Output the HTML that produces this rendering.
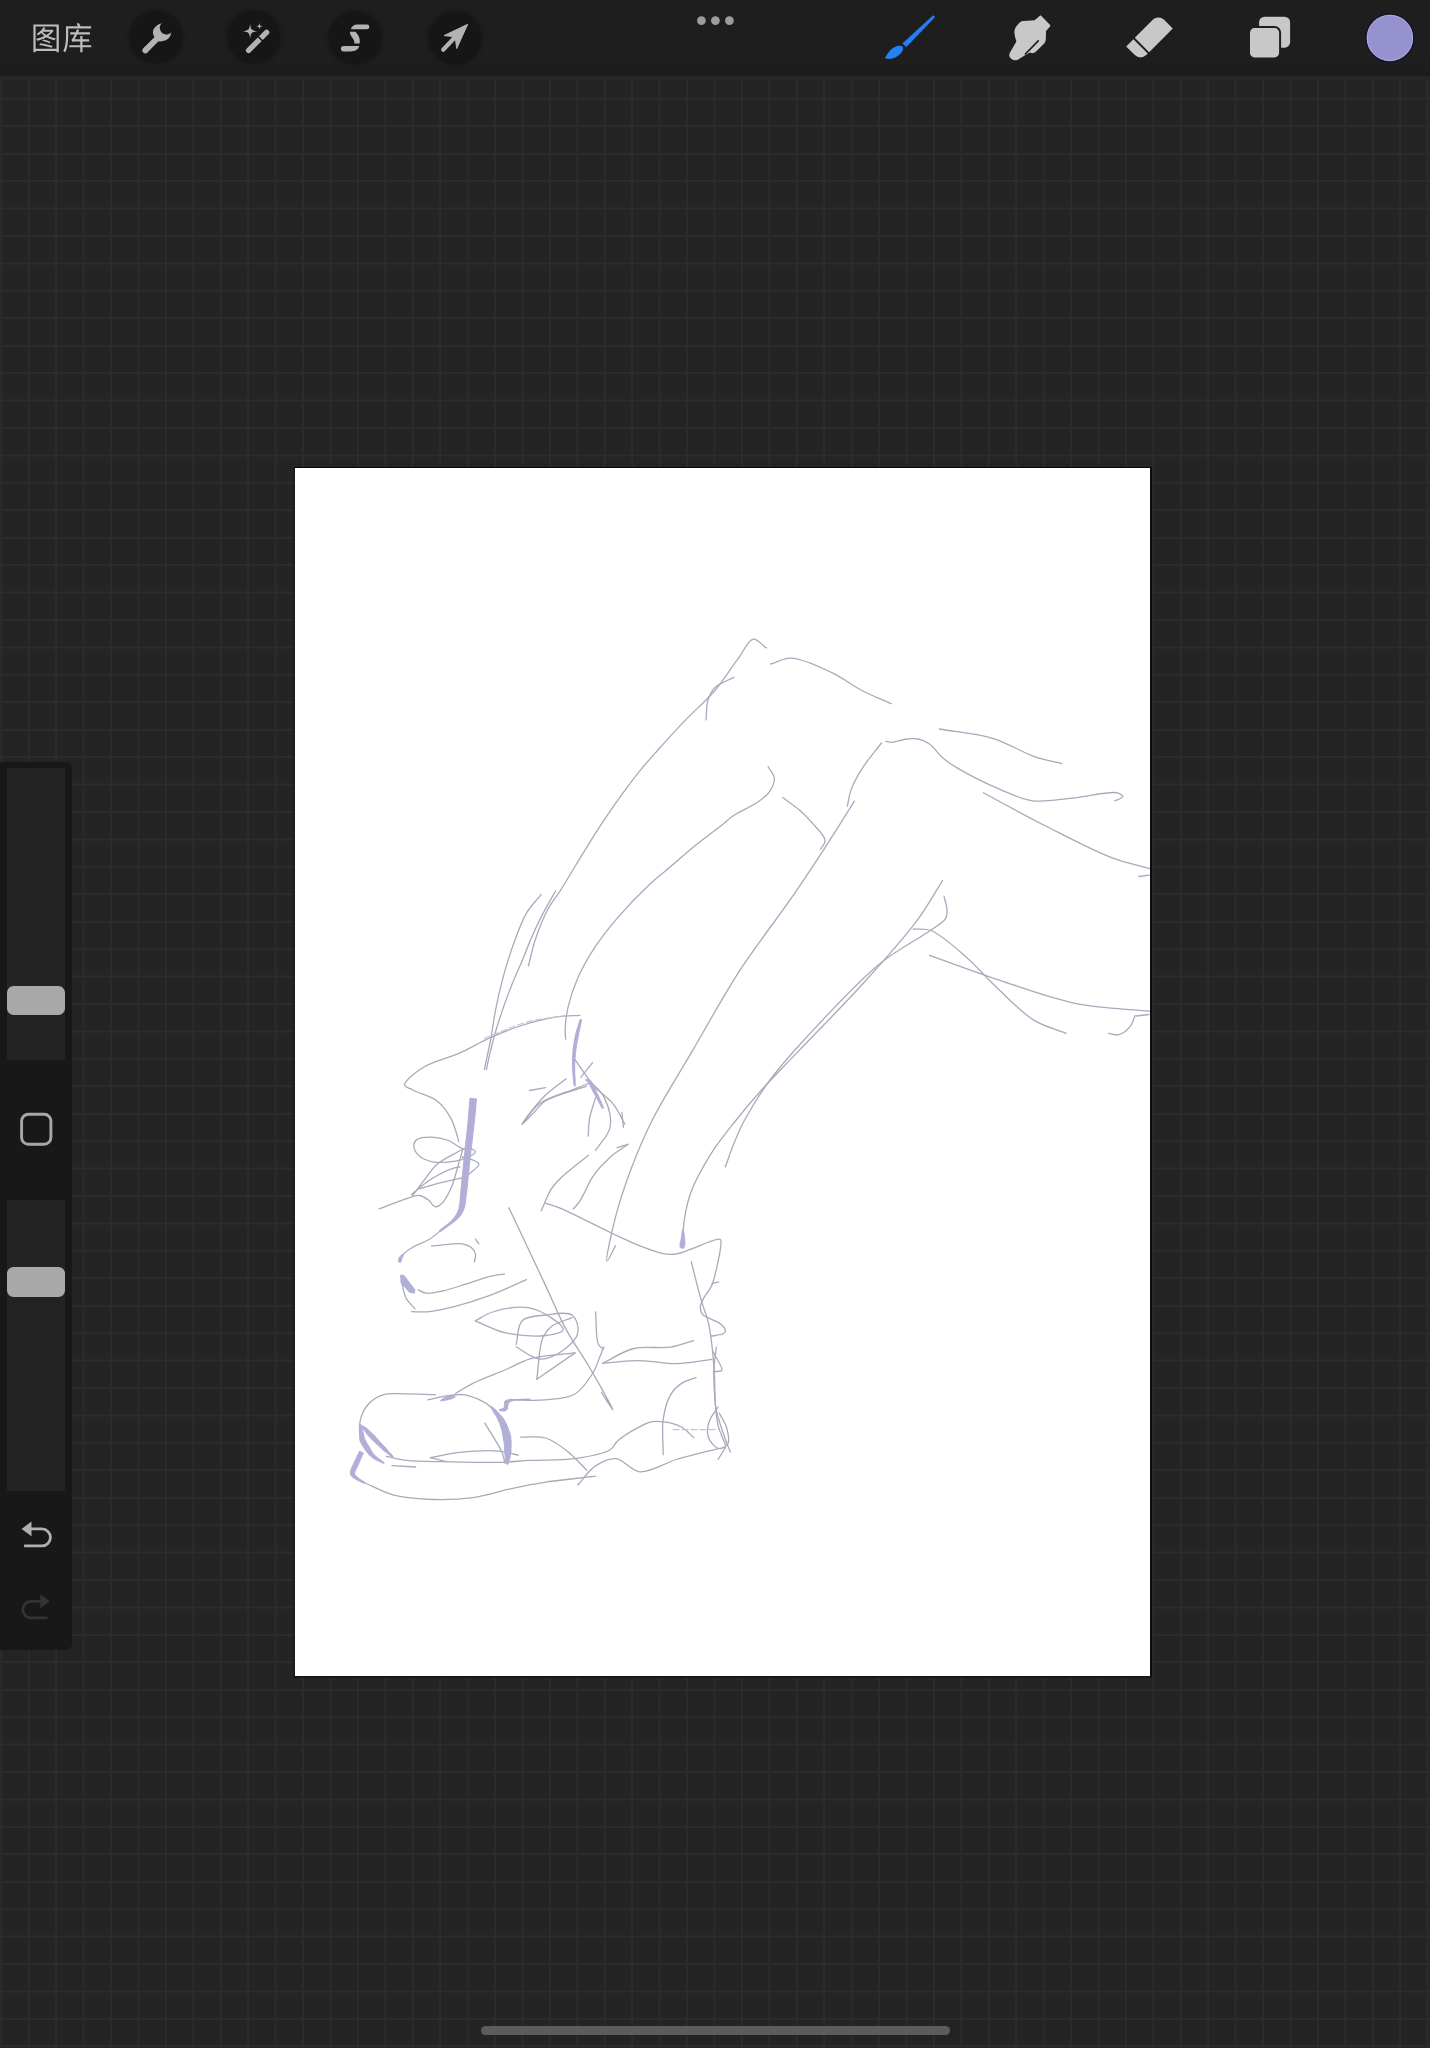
<!DOCTYPE html>
<html><head><meta charset="utf-8">
<style>
html,body{margin:0;padding:0;}
body{width:1430px;height:2048px;overflow:hidden;background:#242424;position:relative;font-family:"Liberation Sans",sans-serif;}
.abs{position:absolute;}
#grid{position:absolute;left:0;top:0;}
#topbar{position:absolute;left:0;top:0;width:1430px;height:75.5px;background:linear-gradient(to bottom,#1e1e1e 0px,#1e1e1e 62px,#1b1b1b 75.5px);}
#topband{position:absolute;left:0;top:75.5px;width:1430px;height:4px;background:#272727;}
#canvas{position:absolute;left:295px;top:468px;width:855px;height:1208px;background:#fff;}
.cb{position:absolute;}
#side{position:absolute;left:0;top:762px;width:72px;height:888px;background:#181818;border-radius:0 6px 6px 0;}
.track{position:absolute;left:7px;width:58.4px;background:#232323;border-radius:1px;}
.thumb{position:absolute;left:6.9px;width:58.2px;height:29.4px;background:#a9a9a9;border-radius:6.5px;}
#home{position:absolute;left:481px;top:2025.5px;width:469px;height:9.2px;border-radius:4.6px;background:#5c5c5c;}
.icirc{position:absolute;width:52px;height:52px;border-radius:50%;background:#161616;box-shadow:0 0 3px 1.5px #181818;}
</style></head><body>
<svg id="grid" width="1430" height="2048"><path d="M1.27 0V2048M28.70 0V2048M56.13 0V2048M83.56 0V2048M110.99 0V2048M138.42 0V2048M165.85 0V2048M193.28 0V2048M220.71 0V2048M248.14 0V2048M275.57 0V2048M303.00 0V2048M330.43 0V2048M357.86 0V2048M385.29 0V2048M412.72 0V2048M440.15 0V2048M467.58 0V2048M495.01 0V2048M522.44 0V2048M549.87 0V2048M577.30 0V2048M604.73 0V2048M632.16 0V2048M659.59 0V2048M687.02 0V2048M714.45 0V2048M741.88 0V2048M769.31 0V2048M796.74 0V2048M824.17 0V2048M851.60 0V2048M879.03 0V2048M906.46 0V2048M933.89 0V2048M961.32 0V2048M988.75 0V2048M1016.18 0V2048M1043.61 0V2048M1071.04 0V2048M1098.47 0V2048M1125.90 0V2048M1153.33 0V2048M1180.76 0V2048M1208.19 0V2048M1235.62 0V2048M1263.05 0V2048M1290.48 0V2048M1317.91 0V2048M1345.34 0V2048M1372.77 0V2048M1400.20 0V2048M1427.63 0V2048M0 16.51H1430M0 43.94H1430M0 71.37H1430M0 98.80H1430M0 126.23H1430M0 153.66H1430M0 181.09H1430M0 208.52H1430M0 235.95H1430M0 263.38H1430M0 290.81H1430M0 318.24H1430M0 345.67H1430M0 373.10H1430M0 400.53H1430M0 427.96H1430M0 455.39H1430M0 482.82H1430M0 510.25H1430M0 537.68H1430M0 565.11H1430M0 592.54H1430M0 619.97H1430M0 647.40H1430M0 674.83H1430M0 702.26H1430M0 729.69H1430M0 757.12H1430M0 784.55H1430M0 811.98H1430M0 839.41H1430M0 866.84H1430M0 894.27H1430M0 921.70H1430M0 949.13H1430M0 976.56H1430M0 1003.99H1430M0 1031.42H1430M0 1058.85H1430M0 1086.28H1430M0 1113.71H1430M0 1141.14H1430M0 1168.57H1430M0 1196.00H1430M0 1223.43H1430M0 1250.86H1430M0 1278.29H1430M0 1305.72H1430M0 1333.15H1430M0 1360.58H1430M0 1388.01H1430M0 1415.44H1430M0 1442.87H1430M0 1470.30H1430M0 1497.73H1430M0 1525.16H1430M0 1552.59H1430M0 1580.02H1430M0 1607.45H1430M0 1634.88H1430M0 1662.31H1430M0 1689.74H1430M0 1717.17H1430M0 1744.60H1430M0 1772.03H1430M0 1799.46H1430M0 1826.89H1430M0 1854.32H1430M0 1881.75H1430M0 1909.18H1430M0 1936.61H1430M0 1964.04H1430M0 1991.47H1430M0 2018.90H1430M0 2046.33H1430" stroke="#2c2c2c" stroke-width="2" fill="none"/></svg>
<div id="topbar"></div>
<div id="topband"></div>
<div class="icirc" style="left:130px;top:11px"></div>
<div class="icirc" style="left:228px;top:11px"></div>
<div class="icirc" style="left:329px;top:12px"></div>
<div class="icirc" style="left:429px;top:12px"></div>
<div class="cb" style="left:293.2px;top:467px;width:1.8px;height:1211px;background:#1d1d1d"></div>
<div class="cb" style="left:293.2px;top:1676px;width:859px;height:1.8px;background:#181818"></div>
<div class="cb" style="left:294px;top:466.8px;width:858px;height:1.4px;background:#060606"></div>
<div class="cb" style="left:1150px;top:467px;width:1.9px;height:1210px;background:#0b0b0b"></div>
<div id="canvas">
<svg width="855" height="1208" style="position:absolute;left:0;top:0">
<g transform="translate(-295,-468)" fill="none" stroke-linecap="round" stroke-linejoin="round">
<g stroke="#aaa9bc" stroke-width="1.3">
<path d="M528.4,966.0C530.7,957.3 532.2,948.9 535.2,940.0C538.5,930.1 543.2,918.1 547.9,909.3C551.8,902.0 556.2,897.1 560.6,890.2C565.5,882.4 569.9,874.7 575.9,865.0C584.2,851.5 595.5,832.6 606.2,816.9C616.9,801.2 630.3,782.9 640.0,770.7C646.7,762.3 651.2,757.5 657.9,750.0C666.1,740.8 676.1,729.8 685.6,719.9C695.2,709.9 706.1,700.9 715.0,690.5C723.7,680.3 731.4,667.5 738.4,658.2C743.8,651.0 747.9,640.0 753.1,639.1C757.3,638.4 761.9,645.0 766.3,647.9"/>
<path d="M706.1,719.9C706.7,713.3 706.2,705.7 708.0,700.0C709.5,695.2 711.4,691.0 715.0,687.5C719.4,683.2 727.7,680.7 734.0,677.3"/>
<path d="M770.8,664.0C777.6,662.1 783.3,657.9 791.3,658.2C802.7,658.6 820.1,667.1 832.4,672.9C843.3,678.1 851.8,685.3 861.8,690.5C871.5,695.5 881.4,699.3 891.2,703.7"/>
<path d="M768.1,766.8C770.2,770.5 773.9,774.0 774.3,778.0C774.7,782.2 772.3,787.5 769.8,791.4C767.2,795.4 763.3,798.1 758.6,801.5C752.0,806.3 739.7,811.3 732.9,816.0C727.9,819.4 725.4,822.3 720.6,826.1C713.8,831.5 703.8,838.7 695.9,845.1C688.2,851.3 681.1,857.7 673.6,864.1C665.9,870.7 658.3,876.2 650.0,884.0C639.7,893.7 626.7,907.1 617.1,918.3C608.6,928.2 601.4,937.4 594.8,947.4C588.4,957.1 582.5,967.3 578.0,977.6C573.6,987.5 570.0,998.4 567.9,1007.8C566.1,1015.7 565.3,1024.4 565.1,1030.2C565.0,1033.9 565.5,1036.2 565.7,1039.2"/>
<path d="M782.7,797.6C788.5,801.9 794.9,806.0 800.0,810.4C804.5,814.3 808.0,818.0 811.9,822.6C816.4,827.8 824.7,835.3 825.1,840.3C825.4,843.6 822.2,846.2 820.7,849.1"/>
<path d="M847.3,806.1C848.6,800.5 849.1,795.2 851.2,789.4C853.7,782.6 857.8,775.3 862.4,768.1C867.6,759.9 875.1,751.4 881.4,743.0"/>
<path d="M885.9,741.3C887.8,741.7 889.2,742.4 891.5,742.4C895.4,742.4 902.3,739.5 907.1,739.0C911.1,738.6 914.6,738.2 918.3,739.0C922.1,739.8 925.8,741.4 929.5,744.0C934.1,747.2 938.1,753.9 942.9,758.0C947.5,761.9 951.2,764.4 957.5,768.1C967.8,774.2 986.6,783.7 1000.0,789.4C1011.4,794.2 1020.9,799.2 1032.5,800.8C1044.9,802.5 1058.6,799.4 1072.3,798.1C1086.9,796.7 1110.0,790.8 1117.5,792.8C1120.4,793.6 1122.9,795.6 1122.8,796.8C1122.7,798.2 1117.5,799.5 1114.8,800.8"/>
<path d="M854.4,801.1C844.7,816.5 835.5,831.5 825.2,847.3C814.3,864.1 803.4,880.6 790.6,899.1C775.5,921.0 756.1,945.3 740.0,970.1C723.3,995.8 707.5,1025.0 692.4,1050.9C678.4,1074.8 663.2,1098.5 652.3,1120.0C643.3,1137.8 636.8,1153.8 630.5,1170.4C624.6,1186.2 619.4,1201.8 615.4,1217.3C611.6,1232.0 605.3,1260.4 607.0,1261.0C608.1,1261.4 612.6,1250.9 615.4,1245.9"/>
<path d="M939.4,729.0C957.1,732.1 976.1,733.3 992.6,738.3C1007.9,742.9 1022.4,752.6 1035.1,756.9C1044.8,760.2 1052.8,761.4 1061.7,763.6"/>
<path d="M983.3,792.8C1004.1,803.9 1024.5,815.3 1045.7,826.0C1067.4,837.0 1093.0,850.6 1112.2,857.9C1126.1,863.2 1137.0,865.0 1149.4,868.5"/>
<path d="M1138.8,876.5L1149.4,875.2"/>
<path d="M942.6,880.6C933.8,894.3 927.1,907.0 916.2,921.7C902.1,940.6 882.1,962.5 863.3,983.3C843.1,1005.6 817.5,1031.2 798.7,1050.9C784.1,1066.2 771.2,1079.2 760.0,1091.7C750.9,1101.8 744.1,1110.0 736.2,1120.0C727.8,1130.6 718.6,1141.7 711.1,1153.6C703.5,1165.7 695.4,1180.0 690.9,1192.2C687.2,1202.2 685.6,1211.3 684.2,1220.7C682.9,1229.7 683.1,1238.6 682.5,1247.6"/>
<path d="M944.1,896.7C945.1,901.1 946.9,905.9 947.0,909.9C947.1,913.1 947.3,915.8 945.6,918.7C942.9,923.2 935.4,926.8 928.0,932.0C916.2,940.3 897.7,949.3 881.0,962.8C858.3,981.2 827.6,1014.5 807.5,1036.2C792.5,1052.3 780.8,1065.3 770.0,1080.0C760.2,1093.3 750.9,1108.5 744.6,1120.0C740.1,1128.2 737.7,1134.2 734.6,1141.8C731.3,1149.8 728.4,1158.6 725.3,1167.0"/>
<path d="M913.3,929.0C919.2,929.5 924.4,928.0 930.9,930.5C941.1,934.4 955.2,947.5 966.1,956.9C976.7,966.1 984.9,976.3 995.5,986.3C1007.2,997.4 1020.8,1012.1 1033.7,1020.1C1044.4,1026.7 1055.2,1028.9 1066.0,1033.3"/>
<path d="M929.4,955.4C954.4,964.2 979.4,973.8 1004.3,981.9C1028.8,989.9 1053.1,999.0 1077.7,1003.9C1101.6,1008.6 1125.7,1008.8 1149.7,1011.2"/>
<path d="M1135.0,1015.7C1133.5,1019.1 1133.0,1022.9 1130.6,1025.9C1127.9,1029.4 1122.9,1033.7 1118.9,1034.7C1115.5,1035.6 1112.0,1033.8 1108.6,1033.3"/>
<path d="M1136.0,1016.0L1149.0,1014.5"/>
<path d="M541.1,894.6C536.2,900.8 530.8,905.7 526.4,913.2C521.0,922.4 516.7,935.4 512.7,946.4C508.9,956.9 505.9,967.0 503.0,977.7C500.0,988.8 497.2,1001.4 495.2,1011.8C493.5,1020.6 492.9,1027.5 491.3,1036.2C489.4,1046.5 486.7,1058.4 484.4,1069.5"/>
<path d="M555.7,890.7C550.8,899.5 545.5,908.5 541.1,917.1C537.1,925.1 533.5,933.0 530.3,940.5C527.4,947.3 525.4,953.0 522.5,960.0C519.0,968.4 514.7,977.4 510.8,987.4C506.2,999.2 500.8,1014.3 497.1,1026.5C493.9,1036.9 491.2,1047.8 489.3,1055.8C488.0,1061.2 487.4,1064.9 486.4,1069.5"/>
<path d="M580.0,1015.3C572.6,1015.8 566.1,1015.4 557.7,1016.7C546.4,1018.5 530.6,1022.6 518.6,1026.5C508.0,1029.9 499.0,1033.9 489.3,1038.2C479.4,1042.6 470.5,1048.2 460.0,1052.9C448.3,1058.2 432.0,1061.7 422.2,1068.0C414.6,1072.9 404.2,1081.2 404.6,1085.0C404.9,1087.4 409.2,1088.1 412.7,1090.0C418.6,1093.2 430.9,1096.1 437.4,1101.2C443.2,1105.7 447.4,1112.0 450.8,1118.1C454.1,1124.0 456.3,1132.9 457.6,1137.1C458.2,1139.1 458.3,1140.1 458.7,1141.6"/>
<path d="M447.5,1224.7C441.5,1229.6 435.6,1235.4 429.5,1239.3C424.0,1242.7 417.5,1244.3 412.7,1247.2C408.8,1249.6 404.8,1252.2 402.6,1255.0C400.9,1257.1 400.7,1259.5 399.7,1261.8"/>
<path d="M580.8,1020.0C578.6,1028.7 575.5,1038.5 574.3,1046.0C573.4,1051.5 573.3,1055.5 573.3,1060.7C573.3,1066.7 574.4,1075.4 574.7,1080.0C574.9,1082.6 574.9,1084.1 575.0,1086.1"/>
<path d="M575.0,1059.7C579.9,1066.6 584.6,1073.8 589.6,1080.3C594.4,1086.4 600.9,1090.5 604.3,1097.6C608.2,1105.7 611.8,1118.0 610.2,1127.0C608.6,1135.6 600.4,1142.7 595.5,1150.5"/>
<path d="M592.6,1062.6L580.8,1077.3"/>
<path d="M589.6,1083.2C597.4,1090.1 607.0,1096.4 613.1,1103.8C618.4,1110.2 621.0,1117.5 624.9,1124.3"/>
<path d="M595.5,1097.9C593.5,1104.7 590.8,1111.8 589.6,1118.4C588.5,1124.4 588.7,1130.1 588.2,1136.0"/>
<path d="M621.9,1112.6L623.4,1127.3"/>
<path d="M529.4,1090.5L545.6,1087.6"/>
<path d="M566.1,1078.8C559.3,1084.2 551.9,1088.9 545.6,1095.0C539.2,1101.2 532.2,1110.0 528.0,1115.5C525.4,1119.0 521.8,1124.1 522.1,1124.3C522.5,1124.6 529.9,1116.5 533.8,1112.6C537.7,1108.7 539.9,1104.4 545.6,1100.8C554.8,1095.0 573.0,1091.0 586.7,1086.1"/>
<path d="M471.0,1148.4C468.0,1148.4 465.3,1149.3 462.1,1148.4C457.9,1147.3 453.5,1142.4 448.6,1140.5C443.4,1138.5 437.1,1137.2 431.7,1137.1C426.7,1137.0 420.0,1137.2 417.1,1139.4C415.0,1140.9 413.8,1143.7 413.8,1146.1C413.8,1148.9 415.8,1152.6 418.3,1155.1C421.5,1158.2 427.0,1160.7 432.9,1161.8C440.8,1163.2 454.5,1162.0 462.1,1159.6C467.7,1157.9 475.4,1153.8 475.5,1151.7C475.6,1150.4 472.5,1149.5 471.0,1148.4"/>
<path d="M412.7,1195.5C417.2,1189.5 421.8,1183.1 426.1,1177.6C430.0,1172.7 432.5,1168.3 437.4,1164.1C443.7,1158.7 453.9,1154.4 462.1,1149.5"/>
<path d="M379.0,1209.0C390.2,1204.9 405.7,1198.4 412.7,1196.6C415.7,1195.8 417.1,1195.1 419.4,1195.5C422.2,1195.9 425.8,1198.1 428.4,1200.0C431.0,1201.9 432.7,1206.3 435.1,1206.7C437.2,1207.0 439.7,1205.3 441.8,1203.4C445.0,1200.5 448.1,1194.7 450.8,1188.8C454.4,1180.9 457.5,1167.0 459.8,1159.6C461.2,1155.0 462.1,1152.1 463.2,1148.4"/>
<path d="M431.7,1246.0C441.8,1245.3 455.1,1242.8 462.1,1243.8C466.0,1244.4 468.7,1245.4 471.0,1247.2C473.1,1248.9 474.9,1251.5 475.5,1253.9C476.1,1256.3 474.8,1259.2 474.4,1261.8"/>
<path d="M475.5,1239.3L478.9,1243.8"/>
<path d="M401.4,1280.8C402.9,1286.4 403.5,1292.9 405.9,1297.7C408.1,1302.1 411.9,1305.2 414.9,1308.9"/>
<path d="M418.3,1289.8C420.9,1290.9 422.9,1292.8 426.1,1293.2C430.6,1293.8 437.0,1292.2 443.0,1290.9C450.0,1289.4 457.8,1286.6 465.4,1284.2C473.4,1281.7 482.8,1278.2 490.0,1276.4C495.4,1275.1 499.7,1274.7 504.5,1273.8"/>
<path d="M411.5,1311.7C417.5,1311.7 423.1,1312.3 429.5,1311.7C437.1,1310.9 445.3,1309.0 454.2,1306.7C465.1,1303.9 478.1,1299.8 490.0,1295.4C502.2,1290.9 514.3,1284.9 526.5,1279.7"/>
<path d="M508.9,1207.8C521.1,1233.7 535.1,1263.4 545.6,1285.6C553.4,1302.3 558.6,1315.5 566.1,1329.4C573.3,1342.8 581.9,1354.3 589.6,1367.5C597.6,1381.2 613.6,1409.8 613.1,1410.1C612.8,1410.3 605.3,1398.4 601.4,1392.5"/>
<path d="M475.1,1320.8C481.0,1317.9 485.6,1314.1 492.7,1312.0C502.2,1309.1 517.6,1306.1 528.0,1307.6C536.8,1308.9 545.3,1313.7 551.5,1317.9C556.5,1321.3 563.9,1326.7 563.2,1329.6C562.5,1332.7 552.8,1334.6 545.6,1335.5C534.9,1336.9 516.9,1335.4 504.5,1332.6C493.7,1330.1 484.9,1324.7 475.1,1320.8"/>
<path d="M516.2,1344.3C518.2,1336.5 517.2,1325.7 522.1,1320.8C527.0,1315.9 537.5,1316.0 545.6,1315.0C554.1,1314.0 566.7,1311.2 572.0,1315.0C576.4,1318.2 579.0,1327.0 577.9,1332.6C576.7,1338.8 569.4,1345.8 563.2,1350.2C556.8,1354.8 547.4,1359.4 539.7,1359.0C531.8,1358.5 524.0,1351.0 516.2,1347.0"/>
<path d="M536.8,1379.3C538.7,1365.6 538.8,1347.4 542.6,1338.2C544.9,1332.7 547.4,1329.6 551.5,1326.4C556.6,1322.4 565.2,1320.5 572.0,1317.6"/>
<path d="M536.8,1379.3L575.0,1352.9"/>
<path d="M522.1,1124.1C528.0,1117.2 532.0,1109.1 539.7,1103.5C548.9,1096.8 565.8,1092.6 575.0,1088.8C580.9,1086.4 584.7,1084.9 589.6,1083.0"/>
<path d="M541.2,1210.7C544.6,1203.4 547.8,1194.4 551.5,1188.7C554.2,1184.5 556.1,1182.5 560.0,1178.7C566.5,1172.3 579.0,1163.0 588.5,1155.2"/>
<path d="M573.4,1209.0C575.6,1206.2 577.7,1204.3 580.1,1200.6C584.1,1194.6 588.3,1182.9 593.6,1175.4C598.5,1168.4 604.4,1162.2 610.4,1156.9C616.0,1152.0 622.1,1148.5 628.0,1144.3"/>
<path d="M617.1,1147.7L628.0,1144.3"/>
<path d="M545.6,1203.3C550.4,1204.9 553.8,1205.6 560.0,1208.1C571.8,1212.9 595.8,1225.7 610.4,1232.5C621.5,1237.7 630.5,1242.2 640.0,1245.9C648.4,1249.2 657.6,1252.7 664.4,1253.8C669.1,1254.5 671.4,1254.7 676.6,1253.8C686.4,1252.1 712.6,1239.5 718.1,1239.2C719.4,1239.1 720.1,1239.0 720.6,1239.8C722.8,1243.2 715.5,1273.7 713.3,1281.3C712.4,1284.3 712.0,1285.1 710.8,1287.4C709.1,1290.6 705.3,1294.9 703.5,1298.4C702.0,1301.3 700.5,1304.2 700.4,1306.9C700.3,1309.4 700.9,1312.4 702.3,1314.2C703.6,1316.0 706.0,1316.6 708.4,1317.9C711.7,1319.7 717.7,1321.4 720.6,1324.0C723.0,1326.1 725.7,1329.6 725.5,1331.3C725.4,1332.4 724.3,1333.1 723.0,1333.8C720.6,1335.1 714.9,1335.4 710.8,1336.2"/>
<path d="M712.0,1283.7L718.8,1281.9"/>
<path d="M691.3,1261.7C694.5,1274.3 697.8,1288.5 701.0,1299.6C703.5,1308.3 706.6,1315.0 708.4,1322.8C710.2,1330.5 711.0,1337.7 712.0,1346.0C713.1,1355.5 713.9,1366.3 714.5,1376.5C715.1,1386.7 714.4,1398.2 715.7,1407.0C716.8,1414.0 718.7,1419.1 720.6,1425.4C722.7,1432.1 726.1,1441.3 727.9,1446.1C728.9,1448.8 729.6,1450.2 730.4,1452.2"/>
<path d="M716.3,1347.2C715.5,1354.9 714.2,1362.1 713.9,1370.4C713.6,1379.9 714.3,1391.3 715.1,1400.9C715.8,1409.5 716.2,1417.8 718.1,1425.4C719.8,1432.4 723.0,1438.4 725.5,1444.9"/>
<path d="M713.3,1352.1C716.1,1358.2 723.3,1367.6 721.8,1370.4C720.8,1372.2 716.1,1371.2 713.3,1371.6"/>
<path d="M718.1,1407.0C715.3,1411.5 711.3,1415.7 709.6,1420.5C708.0,1425.1 707.0,1430.8 707.8,1435.1C708.5,1438.8 711.1,1442.6 713.3,1444.9C715.1,1446.7 717.2,1448.6 719.4,1448.6C722.0,1448.6 726.5,1446.4 727.9,1443.7C729.7,1440.2 728.1,1432.9 726.7,1427.8C725.3,1422.7 721.8,1418.1 719.4,1413.2"/>
<path d="M718.1,1459.5L725.5,1447.3"/>
<path d="M595.5,1312.0C596.5,1322.8 595.7,1338.8 598.4,1344.3C599.5,1346.7 601.3,1347.1 602.8,1348.5"/>
<path d="M602.8,1363.1C613.1,1358.2 622.7,1351.2 633.7,1348.5C645.2,1345.7 659.7,1348.9 670.5,1347.2C679.2,1345.8 686.0,1342.7 693.7,1340.5"/>
<path d="M602.8,1363.1C615.2,1362.3 627.7,1360.5 640.0,1360.6C652.3,1360.7 664.5,1363.9 676.6,1363.7C688.5,1363.5 700.2,1360.8 712.0,1359.4"/>
<path d="M383.8,1463.0C378.1,1458.6 370.6,1455.1 366.6,1449.7C362.9,1444.8 360.7,1438.2 359.9,1432.5C359.1,1427.2 359.7,1421.4 361.3,1416.5C362.9,1411.7 365.6,1406.8 369.2,1403.2C373.0,1399.4 378.2,1396.2 383.8,1394.6C390.3,1392.7 398.4,1393.9 406.4,1393.9C415.5,1393.9 425.9,1394.4 435.7,1394.6"/>
<path d="M365.2,1483.0C374.5,1487.0 382.8,1492.2 393.1,1494.9C405.0,1498.1 419.7,1499.1 433.0,1499.5C446.3,1499.9 459.7,1499.4 472.9,1497.6C486.3,1495.7 500.0,1491.0 512.7,1488.3C524.2,1485.9 533.5,1484.0 545.6,1482.1C560.5,1479.8 578.9,1478.2 595.5,1476.2"/>
<path d="M391.8,1465.7L415.7,1467.0"/>
<path d="M430.4,1457.7C440.1,1455.9 449.1,1453.5 459.6,1452.4C471.8,1451.1 488.7,1450.2 499.4,1451.1C506.8,1451.7 511.8,1453.7 518.0,1455.0"/>
<path d="M386.5,1456.4C393.1,1457.7 398.6,1459.5 406.4,1460.4C417.4,1461.7 432.0,1461.4 446.3,1461.7C462.7,1462.1 484.1,1462.7 499.4,1462.3C511.0,1462.0 518.8,1461.0 530.0,1460.4C543.6,1459.7 561.0,1460.6 575.0,1458.6C587.6,1456.8 603.2,1454.2 610.2,1449.8C614.1,1447.3 614.1,1444.0 617.5,1441.0C622.7,1436.4 633.5,1429.9 640.0,1426.6C644.6,1424.3 647.6,1422.4 652.2,1421.7C657.6,1420.8 665.1,1421.7 670.5,1422.9C675.1,1423.9 678.9,1425.5 682.7,1427.8C686.7,1430.3 690.0,1434.3 693.7,1437.6"/>
<path d="M577.9,1485.0C583.8,1478.6 588.8,1470.3 595.5,1465.9C601.7,1461.8 609.1,1458.0 616.1,1458.6C623.8,1459.3 630.7,1470.9 639.6,1471.8C650.3,1472.8 663.9,1463.3 676.6,1459.5C690.0,1455.5 704.3,1452.2 718.1,1448.6"/>
<path d="M520.7,1437.1C529.0,1437.4 537.7,1435.6 545.6,1438.0C553.9,1440.5 562.1,1447.1 569.1,1452.7C575.7,1458.0 580.8,1464.4 586.7,1470.3"/>
<path d="M484.8,1423.1C490.6,1432.9 499.0,1444.9 502.1,1452.4C503.9,1456.7 503.9,1459.5 504.8,1463.0"/>
<path d="M455.6,1393.3C461.4,1390.0 466.1,1386.6 472.9,1383.3C481.8,1378.9 494.7,1374.3 504.8,1370.0C513.9,1366.1 520.8,1361.5 530.9,1358.7C543.5,1355.2 560.3,1354.8 575.0,1352.9"/>
<path d="M510.3,1399.9C522.1,1399.9 534.4,1401.0 545.6,1399.9C555.9,1398.9 567.1,1398.7 575.0,1394.0C582.5,1389.6 588.1,1380.6 592.6,1373.4C596.7,1366.9 599.3,1357.7 601.4,1352.9C602.5,1350.3 603.1,1349.0 604.0,1347.0"/>
<path d="M663.2,1454.7C663.2,1442.9 661.7,1429.9 663.2,1419.3C664.5,1410.3 666.7,1401.2 670.5,1394.8C673.6,1389.5 678.2,1385.5 682.7,1382.6C686.8,1380.0 691.7,1379.3 696.2,1377.7"/>
<path d="M462.0,1157.0C464.3,1157.5 466.4,1157.6 468.8,1158.5C471.9,1159.7 478.6,1161.7 478.9,1164.1C479.3,1166.8 472.2,1170.8 468.8,1174.2"/>
<path d="M411.5,1194.4C418.2,1189.2 424.4,1183.2 431.7,1178.7C439.0,1174.2 450.4,1168.9 455.3,1167.5C457.4,1166.9 458.4,1167.2 460.0,1167.0"/>
<path d="M419.4,1188.8C427.3,1186.6 435.4,1184.0 443.0,1182.1C450.0,1180.3 456.5,1179.1 463.2,1177.6"/>
<path d="M427.7,1399.9C433.9,1398.6 440.3,1396.8 446.3,1395.9C451.8,1395.1 456.9,1394.1 462.2,1394.6C467.6,1395.1 473.1,1396.9 478.2,1399.2C483.4,1401.5 488.7,1404.8 492.8,1408.5C496.6,1412.0 499.4,1416.3 502.1,1420.5C504.7,1424.7 507.4,1429.0 508.7,1433.8C510.1,1438.7 510.3,1444.5 510.1,1449.7C509.9,1454.7 508.3,1459.4 507.4,1464.3"/>
<path d="M499.4,1409.9C502.1,1409.4 506.6,1409.9 507.4,1408.5C508.2,1407.2 504.1,1403.3 504.8,1401.9C505.6,1400.4 509.5,1400.4 512.7,1399.9C517.3,1399.2 524.2,1399.4 530.0,1399.2"/>
<path d="M430.4,1457.7L446.3,1461.7"/>
</g>
<g stroke="#c4c3d4" stroke-width="1.2" stroke-dasharray="6 3">
<path d="M484.4,1038.2C499.1,1032.7 514.2,1025.4 528.4,1021.6C541.1,1018.2 553.1,1017.7 565.5,1015.7"/>
<path d="M673.0,1429.6L718.1,1429.6"/>
</g>
<g fill="#b1aed8" stroke="#b1aed8" stroke-width="1">
<path d="M469.9,1098.7 L469.8,1100.6 L469.6,1103.0 L469.4,1105.8 L469.1,1109.0 L468.8,1112.4 L468.5,1116.0 L468.2,1119.7 L467.9,1123.4 L467.5,1127.1 L467.1,1131.1 L466.6,1135.3 L466.1,1139.6 L465.6,1144.0 L465.1,1148.4 L464.7,1152.8 L464.2,1157.1 L463.8,1161.4 L463.3,1165.9 L462.9,1170.5 L462.5,1175.0 L462.0,1179.3 L461.6,1183.5 L461.3,1187.3 L460.9,1190.7 L460.6,1193.7 L460.4,1196.3 L460.2,1198.6 L460.1,1200.7 L459.9,1202.5 L459.7,1204.1 L459.4,1205.7 L459.1,1207.2 L458.8,1208.7 L458.4,1209.9 L458.0,1211.1 L457.5,1212.1 L457.0,1213.2 L456.5,1214.2 L455.8,1215.2 L455.1,1216.3 L454.4,1217.3 L453.5,1218.3 L452.6,1219.4 L451.6,1220.4 L450.5,1221.4 L449.5,1222.4 L448.4,1223.4 L447.4,1224.3 L446.4,1225.2 L445.2,1226.1 L444.1,1226.9 L443.0,1227.8 L441.9,1228.6 L440.9,1229.3 L440.1,1229.9 L439.5,1230.4 L440.5,1231.6 L441.1,1231.2 L441.9,1230.6 L442.9,1229.9 L444.0,1229.2 L445.1,1228.3 L446.3,1227.4 L447.5,1226.6 L448.6,1225.7 L449.7,1224.9 L450.9,1224.1 L452.1,1223.3 L453.3,1222.5 L454.5,1221.5 L455.7,1220.6 L456.8,1219.6 L457.9,1218.5 L458.8,1217.5 L459.7,1216.5 L460.6,1215.4 L461.4,1214.3 L462.1,1213.1 L462.8,1211.7 L463.5,1210.3 L464.1,1208.6 L464.6,1206.8 L465.0,1205.0 L465.3,1203.2 L465.5,1201.3 L465.8,1199.2 L466.0,1196.8 L466.3,1194.3 L466.7,1191.3 L467.1,1187.9 L467.5,1184.1 L467.9,1179.9 L468.3,1175.5 L468.8,1171.0 L469.3,1166.5 L469.7,1162.0 L470.2,1157.7 L470.7,1153.5 L471.2,1149.1 L471.7,1144.7 L472.2,1140.3 L472.7,1136.0 L473.2,1131.8 L473.7,1127.8 L474.1,1124.0 L474.5,1120.3 L474.9,1116.6 L475.2,1113.0 L475.6,1109.5 L475.8,1106.3 L476.1,1103.5 L476.3,1101.1 L476.5,1099.3Z"/>
<path d="M490.9,1407.4 L491.5,1408.6 L492.4,1410.1 L493.5,1411.9 L494.7,1413.8 L496.0,1415.8 L497.2,1417.9 L498.2,1419.9 L499.0,1421.8 L499.7,1423.6 L500.4,1425.5 L501.0,1427.4 L501.6,1429.3 L502.1,1431.3 L502.5,1433.3 L502.8,1435.2 L503.1,1437.1 L503.5,1439.0 L503.8,1440.9 L504.1,1442.8 L504.3,1444.8 L504.4,1446.8 L504.5,1448.8 L504.6,1450.7 L504.7,1452.4 L504.9,1454.0 L505.1,1455.7 L505.3,1457.3 L505.4,1458.8 L505.5,1460.3 L505.7,1461.5 L505.8,1462.7 L506.0,1463.5 L508.2,1463.7 L508.5,1462.9 L508.9,1461.9 L509.2,1460.6 L509.6,1459.2 L510.0,1457.6 L510.3,1455.9 L510.6,1454.2 L510.9,1452.4 L511.0,1450.6 L511.0,1448.7 L511.1,1446.7 L511.1,1444.6 L511.1,1442.4 L511.0,1440.1 L510.8,1437.9 L510.5,1435.7 L509.9,1433.6 L509.3,1431.5 L508.5,1429.4 L507.7,1427.3 L506.9,1425.2 L505.9,1423.1 L504.9,1421.2 L503.8,1419.2 L502.4,1417.3 L500.8,1415.4 L499.1,1413.5 L497.4,1411.7 L495.7,1410.1 L494.2,1408.6 L492.9,1407.5 L491.9,1406.6Z"/>
<path d="M441.1,1400.9 L441.6,1400.9 L442.2,1400.8 L442.8,1400.7 L443.6,1400.6 L444.3,1400.4 L445.1,1400.3 L445.8,1400.2 L446.5,1400.1 L447.1,1399.9 L447.7,1399.8 L448.3,1399.6 L448.9,1399.4 L449.5,1399.3 L450.1,1399.2 L450.8,1399.0 L451.3,1398.9 L451.9,1398.6 L452.4,1398.3 L453.0,1398.1 L453.5,1397.8 L454.0,1397.6 L454.5,1397.3 L454.8,1397.1 L455.1,1396.9 L454.9,1396.1 L454.6,1396.0 L454.2,1396.0 L453.7,1396.0 L453.1,1395.9 L452.5,1395.9 L451.9,1395.9 L451.3,1395.9 L450.7,1395.9 L450.1,1396.1 L449.5,1396.2 L448.9,1396.3 L448.2,1396.4 L447.6,1396.6 L446.9,1396.7 L446.2,1396.9 L445.5,1397.1 L444.9,1397.4 L444.2,1397.9 L443.5,1398.3 L442.8,1398.7 L442.2,1399.1 L441.6,1399.5 L441.2,1399.8 L440.9,1400.1Z"/>
<path d="M359.4,1424.6 L359.4,1425.2 L359.3,1426.0 L359.3,1426.9 L359.4,1427.9 L359.4,1429.0 L359.4,1430.2 L359.5,1431.3 L359.5,1432.3 L359.5,1433.2 L359.5,1434.2 L359.5,1435.2 L359.5,1436.2 L359.6,1437.3 L359.7,1438.4 L359.9,1439.6 L360.1,1440.8 L360.6,1442.0 L361.1,1443.1 L361.7,1444.2 L362.3,1445.3 L362.9,1446.3 L363.6,1447.3 L364.3,1448.4 L364.9,1449.4 L365.6,1450.3 L366.3,1451.3 L367.1,1452.3 L367.9,1453.3 L368.7,1454.3 L369.7,1455.3 L370.7,1456.3 L371.8,1457.3 L373.2,1458.2 L374.8,1459.2 L376.5,1460.1 L378.2,1460.9 L379.9,1461.7 L381.4,1462.4 L382.6,1463.0 L383.6,1463.3 L384.0,1462.7 L383.2,1462.0 L382.1,1461.1 L380.8,1460.2 L379.3,1459.1 L377.8,1458.0 L376.4,1456.8 L375.1,1455.7 L374.2,1454.7 L373.3,1453.8 L372.6,1452.8 L372.0,1451.8 L371.4,1450.9 L370.8,1449.8 L370.2,1448.8 L369.7,1447.7 L369.1,1446.6 L368.4,1445.6 L367.8,1444.7 L367.2,1443.7 L366.6,1442.7 L366.1,1441.8 L365.6,1440.9 L365.2,1440.0 L364.9,1439.2 L364.5,1438.4 L364.2,1437.5 L364.0,1436.7 L363.8,1435.7 L363.6,1434.8 L363.4,1433.8 L363.2,1432.7 L362.9,1431.7 L362.6,1430.7 L362.3,1429.7 L361.9,1428.6 L361.6,1427.6 L361.2,1426.6 L360.9,1425.7 L360.6,1425.0 L360.4,1424.4Z"/>
<path d="M361.0,1426.2 L361.2,1426.6 L361.6,1427.1 L362.0,1427.7 L362.5,1428.3 L363.1,1429.0 L363.7,1429.8 L364.2,1430.5 L364.8,1431.2 L365.3,1431.9 L365.9,1432.6 L366.5,1433.3 L367.1,1434.1 L367.7,1434.9 L368.5,1435.8 L369.4,1436.8 L370.4,1438.0 L371.6,1439.2 L373.1,1440.6 L374.6,1442.1 L376.3,1443.7 L377.9,1445.3 L379.6,1446.8 L381.1,1448.3 L382.6,1449.7 L384.1,1450.8 L385.6,1452.0 L387.1,1453.1 L388.5,1454.2 L389.8,1455.2 L391.0,1456.0 L392.1,1456.7 L392.9,1457.2 L393.3,1456.8 L392.7,1456.0 L391.9,1455.0 L391.0,1453.9 L389.9,1452.7 L388.7,1451.4 L387.5,1450.0 L386.2,1448.6 L385.0,1447.1 L383.7,1445.7 L382.2,1444.2 L380.7,1442.5 L379.1,1440.9 L377.6,1439.2 L376.1,1437.6 L374.8,1436.1 L373.6,1434.8 L372.6,1433.8 L371.6,1432.9 L370.8,1432.1 L370.0,1431.4 L369.3,1430.7 L368.6,1430.0 L368.0,1429.4 L367.2,1428.8 L366.4,1428.2 L365.6,1427.6 L364.8,1427.1 L364.0,1426.7 L363.3,1426.2 L362.6,1425.9 L362.1,1425.6 L361.6,1425.4Z"/>
<path d="M359.4,1451.5 L359.0,1452.3 L358.5,1453.4 L357.8,1454.7 L357.1,1456.2 L356.4,1457.7 L355.7,1459.2 L355.0,1460.7 L354.4,1462.1 L353.8,1463.3 L353.2,1464.6 L352.5,1466.0 L351.9,1467.4 L351.3,1468.8 L350.8,1470.2 L350.4,1471.6 L350.3,1473.0 L350.6,1474.4 L351.2,1475.6 L351.9,1476.6 L352.8,1477.3 L353.6,1478.0 L354.5,1478.5 L355.4,1479.0 L356.2,1479.5 L357.2,1480.1 L358.4,1480.7 L359.6,1481.3 L360.9,1481.9 L362.1,1482.4 L363.2,1482.8 L364.1,1483.2 L364.8,1483.4 L365.2,1482.6 L364.6,1482.1 L363.8,1481.6 L362.8,1481.0 L361.7,1480.3 L360.6,1479.6 L359.5,1478.9 L358.6,1478.1 L357.8,1477.5 L357.1,1476.8 L356.4,1476.1 L355.7,1475.5 L355.2,1474.9 L354.9,1474.3 L354.7,1473.8 L354.7,1473.4 L354.7,1473.0 L354.8,1472.4 L355.0,1471.5 L355.4,1470.5 L356.0,1469.3 L356.6,1468.0 L357.3,1466.7 L358.0,1465.3 L358.6,1463.9 L359.2,1462.5 L359.8,1461.1 L360.5,1459.5 L361.2,1458.0 L361.8,1456.5 L362.4,1455.2 L362.9,1454.1 L363.2,1453.3Z"/>
<path d="M400.9,1275.2 L403.7,1275.2 L414.9,1289.8 L414.3,1293.2 L409.3,1292.1 L401.4,1283.1Z"/>
<path d="M401.9,1254.6 L401.6,1254.9 L401.2,1255.2 L400.8,1255.7 L400.4,1256.2 L399.9,1256.8 L399.5,1257.3 L399.1,1257.9 L398.7,1258.4 L398.6,1259.0 L398.5,1259.6 L398.4,1260.2 L398.4,1260.7 L398.5,1261.1 L398.5,1261.4 L398.5,1261.7 L398.6,1261.9 L401.0,1262.1 L401.1,1261.8 L401.2,1261.5 L401.2,1261.2 L401.3,1260.8 L401.4,1260.5 L401.4,1260.2 L401.6,1259.9 L401.7,1259.6 L401.8,1259.2 L401.9,1258.6 L402.1,1258.0 L402.4,1257.4 L402.6,1256.8 L402.9,1256.3 L403.0,1255.8 L403.1,1255.4Z"/>
<path d="M500.0,1410.6 L500.4,1410.7 L501.0,1410.8 L501.7,1410.9 L502.5,1411.0 L503.3,1411.1 L504.2,1411.0 L505.1,1410.9 L506.1,1410.4 L506.8,1409.6 L507.2,1408.7 L507.4,1407.9 L507.6,1407.0 L507.8,1406.3 L507.9,1405.6 L508.0,1405.0 L508.2,1404.6 L508.3,1404.2 L508.5,1403.7 L508.6,1403.4 L508.7,1403.1 L508.8,1402.8 L508.9,1402.6 L509.0,1402.4 L509.2,1402.2 L509.4,1402.0 L509.9,1401.7 L510.4,1401.5 L511.0,1401.3 L511.7,1401.1 L512.2,1400.9 L512.7,1400.8 L513.1,1400.6 L512.9,1399.4 L512.5,1399.4 L512.0,1399.3 L511.4,1399.3 L510.7,1399.3 L510.0,1399.4 L509.2,1399.4 L508.5,1399.6 L507.8,1399.8 L507.2,1400.1 L506.7,1400.5 L506.3,1401.0 L505.9,1401.4 L505.6,1401.9 L505.4,1402.4 L505.1,1402.8 L504.8,1403.4 L504.6,1404.1 L504.5,1404.9 L504.4,1405.7 L504.3,1406.4 L504.2,1407.1 L504.1,1407.6 L503.9,1407.9 L503.9,1408.0 L503.9,1408.2 L503.5,1408.4 L503.0,1408.6 L502.3,1408.8 L501.6,1409.0 L501.0,1409.1 L500.4,1409.2 L500.0,1409.4Z"/>
<path d="M682.4,1230.0 L682.3,1230.6 L682.2,1231.3 L682.1,1232.1 L682.0,1233.1 L681.9,1234.1 L681.8,1235.1 L681.6,1236.1 L681.5,1237.0 L681.3,1237.8 L681.2,1238.7 L681.0,1239.6 L680.8,1240.5 L680.6,1241.4 L680.4,1242.3 L680.2,1243.1 L680.0,1243.8 L680.0,1244.4 L680.1,1245.0 L680.1,1245.6 L680.1,1246.2 L680.1,1246.6 L680.2,1247.1 L680.2,1247.5 L680.3,1247.8 L683.7,1248.2 L683.9,1248.0 L684.0,1247.6 L684.2,1247.2 L684.3,1246.7 L684.5,1246.2 L684.7,1245.6 L684.8,1244.9 L685.0,1244.2 L684.9,1243.5 L684.9,1242.7 L684.8,1241.8 L684.8,1240.8 L684.7,1239.9 L684.7,1238.9 L684.6,1238.0 L684.5,1237.0 L684.4,1236.1 L684.2,1235.1 L684.1,1234.0 L683.9,1233.0 L683.7,1232.1 L683.5,1231.2 L683.4,1230.5 L683.2,1230.0Z"/>
<path d="M580.1,1019.8 L579.7,1020.9 L579.2,1022.5 L578.6,1024.3 L578.0,1026.3 L577.3,1028.4 L576.7,1030.6 L576.1,1032.7 L575.5,1034.7 L575.2,1036.6 L574.8,1038.5 L574.5,1040.4 L574.1,1042.3 L573.8,1044.2 L573.6,1046.0 L573.3,1047.9 L573.1,1049.8 L572.9,1051.7 L572.8,1053.5 L572.7,1055.3 L572.6,1057.1 L572.5,1059.0 L572.5,1060.9 L572.5,1062.9 L572.5,1065.0 L572.6,1067.4 L572.7,1070.1 L572.9,1073.0 L573.1,1075.9 L573.3,1078.7 L573.5,1081.2 L573.7,1083.3 L573.8,1084.8 L575.0,1084.8 L575.0,1083.2 L574.9,1081.1 L574.9,1078.6 L574.8,1075.8 L574.7,1072.9 L574.7,1070.0 L574.7,1067.4 L574.7,1065.0 L574.8,1062.9 L574.8,1060.9 L575.0,1059.1 L575.1,1057.3 L575.3,1055.5 L575.4,1053.8 L575.7,1052.0 L575.9,1050.2 L576.1,1048.3 L576.4,1046.5 L576.7,1044.6 L577.0,1042.7 L577.3,1040.9 L577.7,1039.0 L578.1,1037.2 L578.5,1035.3 L578.8,1033.3 L579.2,1031.2 L579.7,1029.0 L580.1,1026.8 L580.6,1024.8 L581.0,1022.9 L581.3,1021.4 L581.5,1020.2Z"/>
<path d="M585.8,1080.5 L586.1,1080.7 L586.5,1080.9 L586.8,1081.0 L587.1,1081.2 L587.3,1081.4 L587.6,1081.7 L587.9,1082.2 L588.3,1082.9 L588.9,1083.8 L589.6,1085.0 L590.4,1086.4 L591.2,1087.9 L592.1,1089.6 L593.0,1091.3 L593.9,1093.0 L594.8,1094.6 L595.7,1096.4 L596.8,1098.3 L597.9,1100.3 L599.0,1102.4 L600.0,1104.3 L600.9,1106.1 L601.7,1107.5 L602.4,1108.6 L603.6,1108.0 L603.2,1106.8 L602.5,1105.3 L601.7,1103.5 L600.9,1101.4 L599.9,1099.3 L599.0,1097.2 L598.1,1095.2 L597.2,1093.4 L596.4,1091.7 L595.5,1090.0 L594.7,1088.2 L593.8,1086.6 L593.0,1085.0 L592.2,1083.5 L591.4,1082.2 L590.7,1081.1 L589.9,1080.3 L589.1,1079.8 L588.3,1079.4 L587.6,1079.3 L587.1,1079.3 L586.6,1079.4 L586.4,1079.5 L586.2,1079.5Z"/>
</g>
<g stroke="#b3b0d8">

</g>
</g></svg>
</div>
<div id="side">
<div class="track" style="top:5.9px;height:292.6px"></div>
<div class="thumb" style="top:223.9px"></div>
<div class="track" style="top:437.7px;height:291.1px"></div>
<div class="thumb" style="top:505.4px"></div>
</div>
<div id="home"></div>
<svg class="abs" style="left:0;top:0" width="1430" height="80">
<!-- text 图库 -->
<g fill="#bdbdbd">
<path transform="translate(30.85,49.7) scale(0.0305,-0.0317)" d="M375 279C455 262 557 227 613 199L644 250C588 276 487 309 407 325ZM275 152C413 135 586 95 682 61L715 117C618 149 445 188 310 203ZM84 796V-80H156V-38H842V-80H917V796ZM156 29V728H842V29ZM414 708C364 626 278 548 192 497C208 487 234 464 245 452C275 472 306 496 337 523C367 491 404 461 444 434C359 394 263 364 174 346C187 332 203 303 210 285C308 308 413 345 508 396C591 351 686 317 781 296C790 314 809 340 823 353C735 369 647 396 569 432C644 481 707 538 749 606L706 631L695 628H436C451 647 465 666 477 686ZM378 563 385 570H644C608 531 560 496 506 465C455 494 411 527 378 563Z"/>
<path transform="translate(62.3,49.7) scale(0.0303,-0.0317)" d="M325 245C334 253 368 259 419 259H593V144H232V74H593V-79H667V74H954V144H667V259H888V327H667V432H593V327H403C434 373 465 426 493 481H912V549H527L559 621L482 648C471 615 458 581 444 549H260V481H412C387 431 365 393 354 377C334 344 317 322 299 318C308 298 321 260 325 245ZM469 821C486 797 503 766 515 739H121V450C121 305 114 101 31 -42C49 -50 82 -71 95 -85C182 67 195 295 195 450V668H952V739H600C588 770 565 809 542 840Z"/>
</g>
<g fill="#b3b3b3" stroke="none">
<!-- wrench -->
<path d="M161.85,23.2 C158,24 153.3,27.5 153,31.5 C152.8,33.5 153.3,35.5 154.6,36.9 L143,48.5 A3,3 0 0 0 147.2,52.7 L158.5,41.2 C160.3,41.6 163,41.3 165,40.6 C168.5,39.2 171,36 171.2,32.4 C169.5,34 167.5,34.6 165.5,34.4 C162.5,34.2 160.2,31.5 159.8,28.6 C159.5,26.3 160.5,24.3 161.85,23.2 Z"/>
<!-- wand -->
<path d="M248.6,50.4 L266.6,32.4" stroke="#b3b3b3" stroke-width="5.4" stroke-linecap="round"/>
<path d="M258.2,36.6 L262.6,41" stroke="#161616" stroke-width="1.5"/>
<path d="M250.1,24.1 C250.95,30.025000000000002 251.375,30.45 257.5,31.3 C251.375,32.15 250.95,32.575 250.1,38.5 C249.25,32.575 248.825,32.15 242.7,31.3 C248.825,30.45 249.25,30.025000000000002 250.1,24.1 Z"/>
<path d="M259.4,23.1 C259.84999999999997,25.625 260.075,25.85 262.59999999999997,26.3 C260.075,26.75 259.84999999999997,26.975 259.4,29.5 C258.95,26.975 258.72499999999997,26.75 256.2,26.3 C258.72499999999997,25.85 258.95,25.625 259.4,23.1 Z"/>
<!-- selection S -->
<path d="M350.8,29.3 C351.8,26.2 354,24.7 357.5,24.6 L367,24.6 A2.3,2.3 0 0 1 367,29.3 Z"/>
<path d="M349.8,31.8 L355.6,31.8 C357.5,34 359.2,36.5 359.7,39.5 C359.9,41 359.8,42.3 359.6,43.5 L354.4,43.5 C354.5,41.5 353.8,39.5 352.5,38 C351,36.3 350,34.2 349.8,31.8 Z"/>
<path d="M343.6,46.1 L359.2,46.1 C358.4,49.8 355,51.5 350.5,51.5 L343.6,51.5 A2.7,2.7 0 0 1 343.6,46.1 Z"/>
<!-- arrow -->
<path d="M467.7,24.3 L456.7,48.6 L455.2,36.8 L444,35.6 Z" stroke="#b3b3b3" stroke-width="1" stroke-linejoin="round"/>
<path d="M455,37.2 L443.2,49.8" stroke="#b3b3b3" stroke-width="4.2" stroke-linecap="round"/>
<!-- dots -->
<circle cx="701.4" cy="20.6" r="4.4" fill="#9c9c9c"/>
<circle cx="715.4" cy="20.6" r="4.4" fill="#9c9c9c"/>
<circle cx="729.4" cy="20.6" r="4.4" fill="#9c9c9c"/>
</g>
<!-- brush -->
<g fill="#2381f3">
<path d="M902.8,43.4 L932.2,16.4 Q934.6,14.8 934.4,17.6 L906.3,46.8 Z" stroke="#2381f3" stroke-width="0.6" stroke-linejoin="round"/>
<path d="M884.8,58 C887,55 890,48 896.5,46.2 C899.5,45.5 902,45.5 903.2,47.6 C903.5,51 900,55.5 894,58 C890.5,59.2 887,59.2 884.8,58 Z"/>
</g>
<g fill="#c8c8c8">
<!-- smudge -->
<path d="M1039.6,16 C1040.2,15.4 1040.9,15.5 1041.4,16 L1049.9,24.8 C1050.4,25.4 1050.4,26.2 1049.9,26.8 L1046,31 C1046,34 1046,38 1045.7,40 C1045.3,42 1044.3,43.5 1043.2,44.5 L1035.5,52 C1034,53.4 1031.8,53.5 1030.2,52.4 L1026.3,54.6 L1017.8,59.8 C1014.6,61.2 1011,59.8 1009.6,56.8 C1009,55.3 1009.3,53.8 1010,52.6 L1016.4,41.5 C1015.8,39 1014.5,35.5 1014.4,32.8 C1014.3,30.2 1015,28 1016.6,26 L1019.6,22.6 C1020.8,21.3 1022.2,20.9 1023.8,20.9 L1034.6,20.3 Z"/>
<path d="M1038.2,40.8 L1025.4,54" stroke="#1e1e1e" stroke-width="1.7" stroke-linecap="round"/>
<!-- eraser -->
<g transform="translate(1149.5,37.5) rotate(-45)">
<path d="M-10.6,-10.2 L14.8,-10.2 A8,8 0 0 1 22.8,-2.2 L22.8,10.1 L-10.6,10.1 Z"/>
<path d="M-22.8,-10.2 L-12.6,-10.2 L-12.6,10.1 L-14.8,10.1 A8,8 0 0 1 -22.8,2.1 Z"/>
</g>
<!-- layers -->
<rect x="1259.1" y="16.7" width="31" height="31" rx="5.5"/>
<rect x="1249" y="27.1" width="31.1" height="31.3" rx="5.5" stroke="#1e1e1e" stroke-width="2"/>
</g>
<!-- color -->
<circle cx="1389.9" cy="37.9" r="24" fill="#9592cf" stroke="#15152a" stroke-width="1.5"/>
<circle cx="1389.9" cy="37.9" r="22.6" fill="none" stroke="#b3b0de" stroke-width="1" opacity="0.7"/>
</svg>
<svg class="abs" style="left:0;top:1100px" width="72" height="540">
<rect x="21.6" y="14.2" width="29.3" height="30" rx="6.8" fill="none" stroke="#a8a8a8" stroke-width="2.9"/>
<g fill="none" stroke="#b0b0b0" stroke-width="2.8" stroke-linecap="butt">
<path d="M31,428.9 L41.9,428.9 A8.5,8.5 0 0 1 41.9,445.9 L24.1,445.9"/>
</g>
<path d="M21.6,428.9 L31.5,421.5 L31.5,436.3 Z" fill="#b0b0b0"/>
<g fill="none" stroke="#333333" stroke-width="2.8">
<path d="M41,501.3 L31.1,501.3 A8.3,8.3 0 0 0 31.1,517.9 L47.6,517.9"/>
</g>
<path d="M49.8,501.3 L40.3,494.3 L40.3,508.3 Z" fill="#333333"/>
</svg>
</body></html>
